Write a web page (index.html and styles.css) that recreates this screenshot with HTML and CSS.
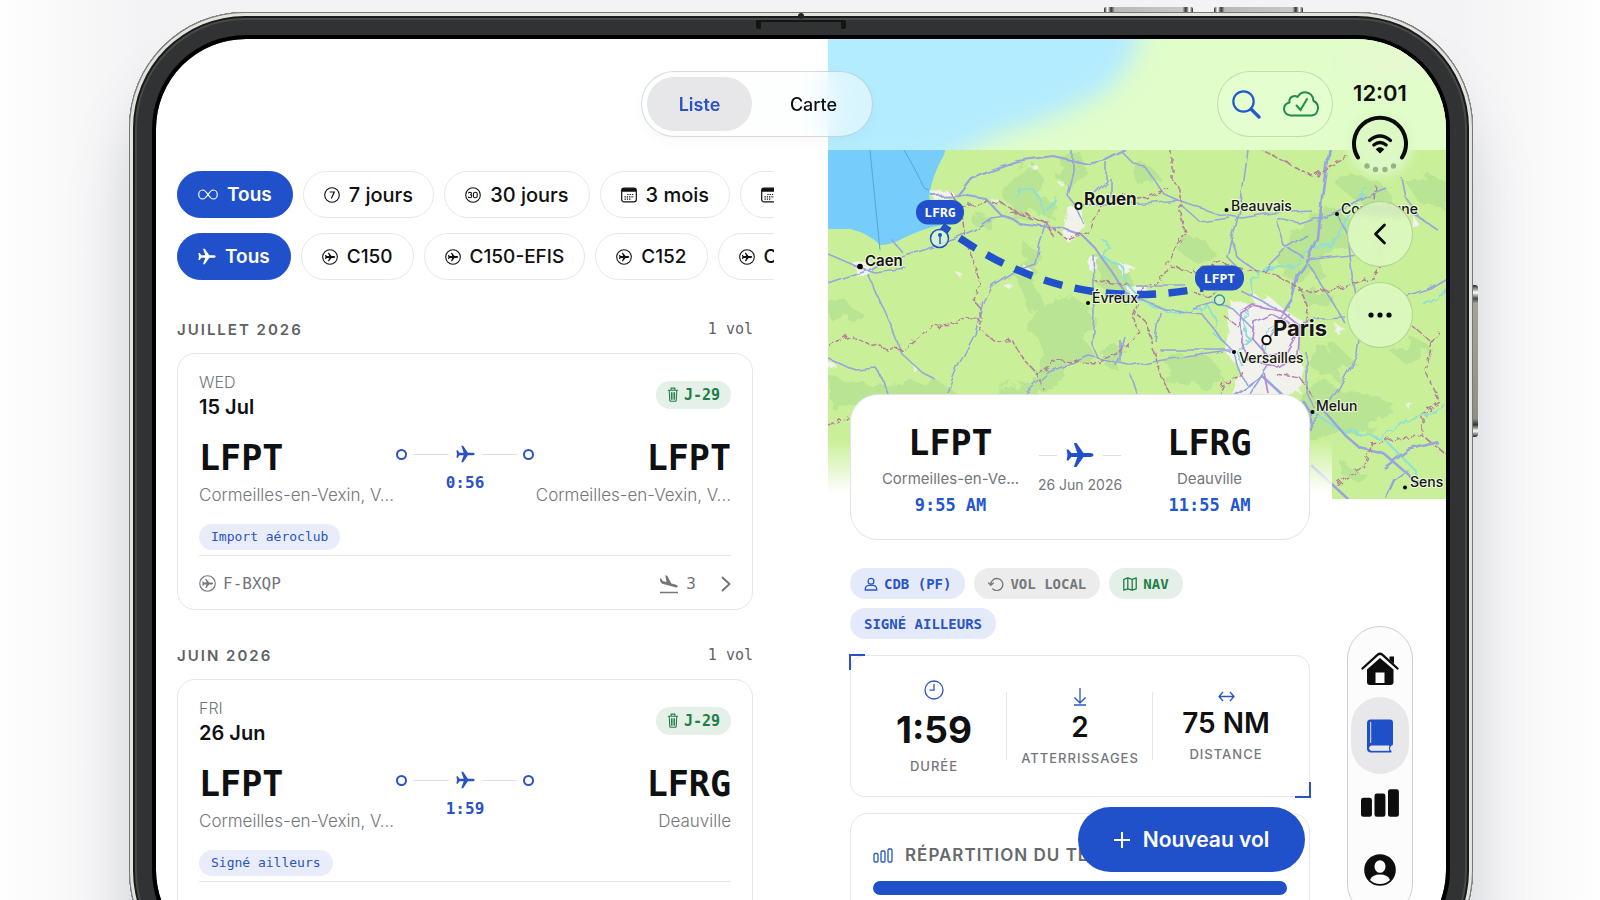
FILE: index.html
```html
<!DOCTYPE html>
<html lang="fr">
<head>
<meta charset="utf-8">
<meta name="viewport" content="width=device-width, initial-scale=1">
<title>Carnet de vol</title>
<link rel="stylesheet" href="styles.css">
</head>
<body>
<svg class="defs" width="0" height="0" aria-hidden="true">
  <symbol id="plane" viewBox="0 0 28 26"><path d="M27.500 13c0 1.300-1.500 2-3.500 2h-6.500l-7 10H7.800l3.500-10H5.200L2.500 18.500H.6L1.500 13 .6 7.500h1.900L5.200 11h6.100L7.800 1h2.700l7 10H24c2 0 3.500.7 3.500 2z" fill="currentColor"/></symbol>
  <symbol id="plane-circle" viewBox="0 0 16 16"><circle cx="8" cy="8" r="7.300" fill="none" stroke="currentColor" stroke-width="1.100"/><path d="M13.200 8c0 .6-.7.9-1.500.9H9.500L7 12.300H5.900L7.200 8.900H4.800l-1 1.200H3L3.400 8 3 5.900h.8l1 1.200h2.400L5.900 3.700H7l2.500 3.400h2.200c.8 0 1.500.3 1.500.9z" fill="currentColor"/></symbol>
  <symbol id="calendar" viewBox="0 0 16 16"><rect x=".7" y="1.200" width="14.600" height="13.600" rx="2.400" fill="none" stroke="currentColor" stroke-width="1.200"/><path d="M.7 4.800V3.500Q.8 1.200 3 1.200h10q2.200 0 2.300 2.300v1.300z" fill="currentColor"/><path d="M6.300 7.500H13M3.500 9.800H13M3.500 12.100h7" stroke="currentColor" stroke-width="1.200" stroke-dasharray="1.300 1"/></symbol>
  <symbol id="trash" viewBox="0 0 12 16"><path d="M1 3.500h10M4 3.300V1.200h4v2.100M2 3.800l.5 10.500q.1.900 1 .9h5q.9 0 1-.9L10 3.800M4.300 6v7M6 6v7M7.700 6v7" fill="none" stroke="currentColor" stroke-width="1.100" stroke-linecap="round"/></symbol>
  <symbol id="landing" viewBox="0 0 20 20"><path d="M1 18.500h18" stroke="currentColor" stroke-width="1.500"/><path d="M.8 4.200l1.300.3 1.600 2.600 3.800 1L6.300 1.300l1.900.5 4.200 7.600 4.800 1.300q2 .8 1.500 2.100-.5.900-2.500.4L3.400 9.700Q1.700 9 1.400 7.500z" fill="currentColor"/></symbol>
  <symbol id="chevron-right" viewBox="0 0 10 16"><path d="M1.500 1.500L8.500 8l-7 6.500" fill="none" stroke="currentColor" stroke-width="2" stroke-linecap="round" stroke-linejoin="round"/></symbol>
</svg>

<div class="scene">
  <div class="device">
    <span class="key key-up"></span><span class="key key-down"></span><span class="key key-power"></span>
    <span class="hinge"></span>
    <main class="screen">

      <section class="list-pane" aria-label="Liste des vols">
        <div class="chip-row">
          <button class="chip chip-on"><svg class="ico" viewBox="0 0 20 11"><path d="M10 5.500C8 2.500 6.500 1 4.700 1a4 4.500 0 0 0 0 9C6.500 10 8 8.500 10 5.500S13.500 1 15.300 1a4 4.500 0 0 1 0 9C13.500 10 12 8.500 10 5.500z" fill="none" stroke="currentColor" stroke-width="1.200"/></svg>Tous</button>
          <button class="chip"><svg class="ico-s" viewBox="0 0 16 16"><circle cx="8" cy="8" r="7.300" fill="none" stroke="currentColor" stroke-width="1.100"/><path d="M5.700 5h4.600L7.300 11.500" fill="none" stroke="currentColor" stroke-width="1.200"/></svg>7 jours</button>
          <button class="chip"><svg class="ico-s" viewBox="0 0 16 16"><circle cx="8" cy="8" r="7.300" fill="none" stroke="currentColor" stroke-width="1.100"/><path d="M3.400 6.200q.4-1 1.700-1 1.500.2 1.300 1.500-.2 1-1.300 1.100 1.700.1 1.700 1.500-.2 1.500-1.800 1.500-1.400 0-1.800-1.200" fill="none" stroke="currentColor" stroke-width="1.100"/><rect x="8.400" y="5.200" width="3.800" height="5.600" rx="1.800" fill="none" stroke="currentColor" stroke-width="1.100"/></svg>30 jours</button>
          <button class="chip"><svg class="ico-s"><use href="#calendar"/></svg>3 mois</button>
          <button class="chip" aria-label="Période plus longue"><svg class="ico-s"><use href="#calendar"/></svg></button>
        </div>
        <div class="chip-row aircraft">
          <button class="chip chip-on"><svg class="ico-p"><use href="#plane"/></svg>Tous</button>
          <button class="chip"><svg class="ico-s"><use href="#plane-circle"/></svg>C150</button>
          <button class="chip"><svg class="ico-s"><use href="#plane-circle"/></svg>C150-EFIS</button>
          <button class="chip"><svg class="ico-s"><use href="#plane-circle"/></svg>C152</button>
          <button class="chip"><svg class="ico-s"><use href="#plane-circle"/></svg>C</button>
        </div>

        <div class="month">
          <header class="month-head"><h2>JUILLET 2026</h2><span class="count">1 vol</span></header>
          <article class="flight">
            <div class="flight-top">
              <div class="date"><span class="weekday">WED</span><strong>15 Jul</strong></div>
              <span class="left-days"><svg><use href="#trash"/></svg>J-29</span>
            </div>
            <div class="route">
              <div class="stop"><span class="code">LFPT</span><span class="city">Cormeilles-en-Vexin, V...</span></div>
              <div class="leg"><div class="leg-line"><i class="dot"></i><i class="line"></i><svg><use href="#plane"/></svg><i class="line"></i><i class="dot"></i></div><span class="duration">0:56</span></div>
              <div class="stop stop-end"><span class="code">LFPT</span><span class="city">Cormeilles-en-Vexin, V...</span></div>
            </div>
            <span class="origin">Import aéroclub</span>
            <footer class="flight-foot"><svg class="foot-reg"><use href="#plane-circle"/></svg><span class="reg">F-BXQP</span><svg class="foot-land"><use href="#landing"/></svg><span class="landings">3</span><svg class="foot-go"><use href="#chevron-right"/></svg></footer>
          </article>
        </div>

        <div class="month">
          <header class="month-head"><h2>JUIN 2026</h2><span class="count">1 vol</span></header>
          <article class="flight">
            <div class="flight-top">
              <div class="date"><span class="weekday">FRI</span><strong>26 Jun</strong></div>
              <span class="left-days"><svg><use href="#trash"/></svg>J-29</span>
            </div>
            <div class="route">
              <div class="stop"><span class="code">LFPT</span><span class="city">Cormeilles-en-Vexin, V...</span></div>
              <div class="leg"><div class="leg-line"><i class="dot"></i><i class="line"></i><svg><use href="#plane"/></svg><i class="line"></i><i class="dot"></i></div><span class="duration">1:59</span></div>
              <div class="stop stop-end"><span class="code">LFRG</span><span class="city">Deauville</span></div>
            </div>
            <span class="origin">Signé ailleurs</span>
            <footer class="flight-foot"></footer>
          </article>
        </div>
      </section>

      <section class="detail-pane" aria-label="Détail du vol">
        <svg class="map" viewBox="828 39 618 460" preserveAspectRatio="xMidYMin slice" role="img" aria-label="Trajet LFPT vers LFRG">
          <defs>
            <filter id="rough" x="-5%" y="-5%" width="110%" height="110%"><feTurbulence type="fractalNoise" baseFrequency=".12" numOctaves="2" seed="4"/><feDisplacementMap in="SourceGraphic" scale="9"/></filter>
            <filter id="rough2" x="-5%" y="-5%" width="110%" height="110%"><feTurbulence type="fractalNoise" baseFrequency=".06" numOctaves="3" seed="9"/><feDisplacementMap in="SourceGraphic" scale="22"/></filter>
            <filter id="wobble" x="-5%" y="-5%" width="110%" height="110%"><feTurbulence type="fractalNoise" baseFrequency=".05" numOctaves="2" seed="2"/><feDisplacementMap in="SourceGraphic" scale="7"/></filter>
            <filter id="soft" x="-20%" y="-20%" width="140%" height="140%"><feGaussianBlur stdDeviation="12"/></filter>
            <filter id="soft-s" x="-20%" y="-20%" width="140%" height="140%"><feGaussianBlur stdDeviation="5"/></filter>
            <linearGradient id="fade" x1="0" y1="0" x2="0" y2="1"><stop offset="0" stop-color="#fff" stop-opacity="0"/><stop offset=".9" stop-color="#fff"/></linearGradient>
            <clipPath id="veil"><rect x="828" y="39" width="618" height="111"/></clipPath>
          </defs>
          <rect x="828" y="39" width="618" height="460" fill="#c9f098"/>

          <!-- woodland -->
          <g filter="url(#rough2)" fill="#b8e493">
            <path d="M1015 168l18-6 8 14-6 18 22 10-4 14-24-6-14 10-8-22z"/><path d="M1063 160l16-10 8 22-14 16-14-6z"/>
            <path d="M1026 244l14 10-8 28 10 22-14 8-10-30z"/><path d="M1036 306l36-10 24 18-12 20 8 22-26 12-14 24-20-12 12-26-12-20z"/>
            <path d="M1096 256l26 6 16 30-12 14-30-22z"/><path d="M828 376l34 8 30 2 40-8 24 14-6 12-120 4z"/><path d="M828 300l22 4 14 10-20 8-16-4z"/>
            <path d="M1300 222l26-16 30 16-12 26-34 8-12 16-22-12z"/><path d="M1284 248l34 4 4 20-24 10-20-10z"/><path d="M1334 182l28-6 20 8 10 20-30 2z"/>
            <path d="M1170 354l40 4 16 18-22 12-40-6z"/><path d="M1310 350l26-4 18 14-16 20-24-10z"/><path d="M1260 440l60-60 40 14 36 10-24 28-60 4z"/><path d="M1404 180l24-6 18 8v28l-24-4z"/>
            <path d="M1182 238l26 4 8 14-18 6-18-10z"/><path d="M996 386l40-6 20 10-10 10h-48z"/><path d="M1130 170l20-4 8 10-20 8z"/><path d="M1345 466l20 6-4 10-16-4z"/>
            <path d="M1105 340l20 6-8 24-16-8z"/><path d="M1300 290l30 2 6 12-24 6z"/><path d="M1388 350l30-10 16 10-28 14z"/><path d="M975 212l20 8-8 8-14-4z"/>
          </g>

          <!-- sea -->
          <path d="M828 140h120l-4 15q-12 20-15 42l6 12 7 16q-22 4-44 16-10 4-18 4-12-12-30-16h-22z" fill="#76cdfb"/>
          <path d="M870 150l10 100M904 150q14 24 20 38l20 9" fill="none" stroke="#58a5d6" stroke-width="1"/>

          <!-- built-up areas -->
          <g filter="url(#rough)" fill="#f2f2ec">
            <path d="M929 190l24 2 4 6-22 2zM852 262l18-2 4 12-14 6zM1068 208h12l4 18-14 18-8-8z"/>
            <path d="M1230 300l20 4 18-8 22 18 12 6-4 30 6 22-4 20-30 6-20-6-18 4 8-26-14-18z"/>
            <path d="M1090 254l8 2-3 16-6-2zM1250 290l20 16-14 2zM1118 262l18 6-14 8zM990 200l6-3 2 6zM1029 167l8-2 2 4zM1057 182l5-2-1 6zM1002 284l12 2-4 4zM955 272l8 2-4 2zM912 362l6 6-6 2zM1012 360l5-3zM1128 288h20v10h-18zM1414 216l6 10-6 4zM1334 322l12 8-10 4zM1022 264l8 4-4 6z"/>
            <path d="M828 362l8 2-6 6zM1166 410l10 4-8 6zM1250 392l30 2-4 14-18 2zM1406 406l8-2-4 5z"/>
          </g>
          <g fill="none" stroke="#8edfd6" stroke-width="2" filter="url(#rough)">
            <path d="M1018 198q2-14 14-10l10 14 2 14M1048 212q4-12 8-16M1100 238q14 4 4 20l18 8 4 16 10 12"/><path d="M1128 294l30 14 24 6 26-8 10 16-6 10 14 12M1248 310q-8 26 4 30l-16 12 6 14"/>
            <path d="M1252 296v-16l14-12 30-2 16-18 20-4 20-34 14-22M1270 400l40 10 30 20 40 8 22-16 30-10 14-6M1385 440l30 30 4 14"/><path d="M1425 306l26-18M1284 322l-16 6-4 24"/>
          </g>

          <!-- roads -->
          <g fill="none" stroke="#98a5dc" stroke-width="1.600" stroke-linejoin="round" filter="url(#wobble)">
            <path stroke-width="2.200" d="M957 196l14-18 16-7 30-10 36-5 35 8 18-4 20-10M932 196l30-1 24 4 15 16 18 8 45 6 18 6 14 14 34 50"/>
            <path d="M828 283l40-14 10-6 36-11 46-16 14-6 17-12 14-2M828 254l28 12 18 6 32-4M868 274l22 50 12 30 22 20 12 6M947 392l10-24 18-34 8-32 8-16 22-14 22-8 4-22 8-22"/>
            <path d="M1072 150v20l-6 24 10 12 8 18M1106 162v18l-16 16M1084 206l60-3 34-3 40 14 24 4 30-5 40-2"/>
            <path d="M1120 150l14 14 10 2 20 28 14 6M1248 150l-4 30-4 30-8 30 6 18 20 14M1230 218l-30 4-20-18M1092 254l2 60-2 30 6 14"/>
            <path d="M828 358l30 14 20-2 10 24M1025 394l24-22 40-16 44 10 30-6 60-8M1130 374l8 24M1116 366l8-30M1136 286h50M1128 294l40 16 34 4 20 26 10 10 10 26 4 8"/>
            <path stroke-width="2.600" d="M1329 145l-7 52-4 42-10 22-10 14-6 24-14 22M1262 376l-30 20M1262 376l26 24"/>
            <path d="M1250 394l18-28-6-20 14-20 14-12M1254 330l-20-20-22-8-20 6M1273 332l46-14 26-1M1308 264l38 60M1306 260l52-6M1276 218l24 6 36-12 30-16 20-8M1276 220l8 26 20 12M1337 214l10 20 4 40 10 50-4 30-18 34-16 24-12 10M1402 178l4 20 14 20 20 14M1400 298l30-10 20-12M1424 220l-12-6M1306 352v40l8 16M1160 312l-4 30M1264 270l20-20 24-14"/>
            <path stroke-width="2.400" d="M1316 402l30 34 14 12 24 6 24 20 8 10M1384 468l24-18 30-8M1310 430v-18l-8-12M1310 464l38 35M1386 498l8-18 14-10"/>
            <path d="M1110 196v-18M1232 240l-4 18 14 14M1240 290l36 18M1230 350h-70M1120 340v22M892 240l10 12"/>
          </g>
          <g fill="none" stroke="#b58bd6" stroke-width="1.800" filter="url(#wobble)"><path d="M1252 338l2-16 18-8 16 8 8 16-8 14-20 4zM1240 312l12-8 28 6 20 16-2 30-20 12-30-8-6-20zM1265 374l4 20"/></g>

          <!-- département borders -->
          <g fill="none" stroke="#b57b9c" stroke-width="1.500" stroke-dasharray="6 2" filter="url(#rough)">
            <path d="M950 192l10 14 4 30 8 22 8 22-6 20 6 8v22l16 12 16-2 12 20 12 12 8 18M960 206l40-4 24 14 24 8 20 16 22-10 14-30 22-6 20 4 22-10M1010 212l16 2 20 10 8 14"/>
            <path d="M828 344l24-8 20 10 30 4 30-24 20-2 16-6 12 2M1172 150v30l8 8v24l6 24-14 16-12 30-18 8-10 26 8 16-24 22-20 8-38-2-22 14M1154 346l-10-26-10-8M1170 266l20 6 30-10 24 8 26 2 30 16 8 20-2 24M1258 148l54 28 18-10 20-10"/>
            <path d="M1298 290l20 2 30-6 26-10 10-12-6-20-6-30 4-30M1224 316l14 10M1245 374l-20 8-10 20M1154 350l6 24 10 20M1276 374l24 4 14 20M1412 326l20 16 8-12M1432 342l-6 30 14 30-18 12v20l-50 10-8 24-18 10-10 10M1420 434l26 20M828 425l20-8M1092 280l40 6M1192 290l12 8 14-6"/>
          </g>

          <!-- frosted header -->
          <g clip-path="url(#veil)">
            <rect x="828" y="39" width="618" height="111" fill="#e0fdca"/>
            <path d="M780 0h366l-12 56-26 34-54 26-60 20-60 30H780z" fill="#b4ecff" filter="url(#soft)"/>
            <ellipse cx="1400" cy="62" rx="60" ry="14" fill="#eaf8d2" filter="url(#soft)"/>
          </g>
          <circle cx="1380" cy="144" r="32" fill="#dcf8c4" filter="url(#soft-s)"/>
          <path d="M828 440h504v59H828z" fill="url(#fade)"/>

          <!-- track -->
          <path d="M942 226C1007 273 1087 310 1203 288" fill="none" stroke="#2150cb" stroke-width="7.500" stroke-dasharray="19 12.500" stroke-dashoffset="10"/>
          <circle cx="939.500" cy="238.500" r="9" fill="#dcf2ea" fill-opacity=".7" stroke="#1f58b5" stroke-width="1.500"/><path d="M940 236v8" stroke="#1f58b5" stroke-width="1.500"/><circle cx="940" cy="235" r="2" fill="#1f58b5"/>
          <circle cx="1219.500" cy="300" r="5" fill="#cdf0c4" stroke="#3b8fae" stroke-width="1.400"/>

          <g class="towns">
            <circle cx="860" cy="266.500" r="2.800"/><text x="865" y="266" font-size="15">Caen</text>
            <circle cx="1078.500" cy="206" r="3" class="ring"/><text x="1084" y="205" font-size="17" class="major">Rouen</text>
            <circle cx="1088" cy="303" r="2"/><text x="1092" y="303" font-size="14" class="minor">Évreux</text>
            <circle cx="1226.500" cy="210" r="2"/><text x="1231" y="211" font-size="14" class="minor">Beauvais</text>
            <circle cx="1337" cy="214" r="2"/><text x="1341" y="214" font-size="14" class="minor">Compiègne</text>
            <circle cx="1266.500" cy="340" r="4.200" class="ring"/><text x="1273" y="336" font-size="22" class="major">Paris</text>
            <circle cx="1234" cy="352" r="2"/><text x="1239" y="363" font-size="14" class="minor">Versailles</text>
            <circle cx="1312.500" cy="412" r="2"/><text x="1316" y="411" font-size="14" class="minor">Melun</text>
            <circle cx="1405" cy="487.500" r="2"/><text x="1410" y="487" font-size="14" class="minor">Sens</text>
          </g>
          <rect x="916" y="200" width="48" height="24.500" rx="12" fill="#2150cb"/><text class="pin" x="940" y="217" text-anchor="middle">LFRG</text>
          <rect x="1195" y="265.500" width="49" height="25" rx="12" fill="#2150cb"/><text class="pin" x="1219.500" y="283" text-anchor="middle">LFPT</text>
        </svg>

        <div class="detail">
          <div class="summary">
            <div class="end"><span class="code">LFPT</span><span class="end-city">Cormeilles-en-Ve...</span><span class="time">9:55 AM</span></div>
            <div class="mid"><div class="mid-line"><i class="line"></i><svg><use href="#plane"/></svg><i class="line"></i></div><span class="day">26 Jun 2026</span></div>
            <div class="end"><span class="code">LFRG</span><span class="end-city">Deauville</span><span class="time">11:55 AM</span></div>
          </div>

          <div class="tags">
            <span class="tag"><svg viewBox="0 0 14 14"><circle cx="7" cy="4.200" r="2.900" fill="none" stroke="currentColor" stroke-width="1.300"/><path d="M1.200 13q0-4.300 3.600-4.600h4.400q3.600.3 3.600 4.600z" fill="none" stroke="currentColor" stroke-width="1.300" stroke-linejoin="round"/></svg>CDB (PF)</span>
            <span class="tag tag-grey"><svg class="wide" viewBox="0 0 16 14"><path d="M2.800 7.500a6 6 0 1 1 2 4.500M.6 6l2.200 2.300L5.400 6" fill="none" stroke="currentColor" stroke-width="1.300" stroke-linecap="round"/></svg>VOL LOCAL</span>
            <span class="tag tag-green"><svg viewBox="0 0 14 14"><path d="M.8 2.300l4-1.500 4.400 1.500 4-1.500v11l-4 1.400-4.400-1.400-4 1.400zM4.800.8v11M9.200 2.300v11" fill="none" stroke="currentColor" stroke-width="1.300" stroke-linejoin="round"/></svg>NAV</span>
            <span class="tag">SIGNÉ AILLEURS</span>
          </div>

          <div class="stats">
            <div class="stat"><svg class="clock" viewBox="0 0 20 20"><circle cx="10" cy="10" r="9" fill="none" stroke="currentColor" stroke-width="1.300"/><path d="M10 4v6.200H5.500" fill="none" stroke="currentColor" stroke-width="1.300"/></svg><strong class="big">1:59</strong><span>DURÉE</span></div>
            <div class="stat"><svg class="down" viewBox="0 0 14 18"><path d="M7 0v15M1.500 9.500L7 15l5.500-5.500M1 17h12" fill="none" stroke="currentColor" stroke-width="1.300"/></svg><strong>2</strong><span>ATTERRISSAGES</span></div>
            <div class="stat"><svg class="span-ico" viewBox="0 0 17 11"><path d="M1 5.500h15M5 1L1 5.500 5 10M12 1l4 4.500-4 4.500" fill="none" stroke="currentColor" stroke-width="1.300"/></svg><strong>75 NM</strong><span>DISTANCE</span></div>
          </div>

          <div class="split">
            <h3><svg viewBox="0 0 20 15"><g fill="none" stroke="currentColor" stroke-width="1.300"><rect x="1" y="5.500" width="4" height="8.500" rx="1.200"/><rect x="8" y="3" width="4" height="11" rx="1.200"/><rect x="15" y="1" width="4" height="13" rx="1.200"/></g></svg>RÉPARTITION DU TEMPS</h3>
            <div class="bar"></div>
          </div>
        </div>

        <aside class="rail">
          <time>12:01</time>
          <svg class="wifi" viewBox="0 0 58 60"><path d="M7 42.500a26 26 0 1 1 44 0" fill="none" stroke="#0a0a0a" stroke-width="4" stroke-linecap="round"/><path d="M18.500 25.500q10.500-9 21 0M22.800 30q6.200-5 12.400 0" fill="none" stroke="#0a0a0a" stroke-width="3.200" stroke-linecap="round"/><path d="M29 37.500l-3.200-3.200q3.200-2.500 6.400 0z" fill="#0a0a0a" stroke="#0a0a0a" stroke-width="1.500"/><g fill="#93b583"><circle cx="16" cy="51" r="2.700"/><circle cx="24.500" cy="54.500" r="2.700"/><circle cx="34" cy="54.500" r="2.700"/><circle cx="42.500" cy="51" r="2.700"/></g></svg>
          <button class="round" aria-label="Retour"><svg viewBox="0 0 14 22"><path d="M11.500 2L2.500 11l9 9" fill="none" stroke="#0a0a0a" stroke-width="2.800" stroke-linecap="round" stroke-linejoin="round"/></svg></button>
          <button class="round" aria-label="Plus"><svg class="more" viewBox="0 0 24 6"><circle cx="3" cy="3" r="2.600"/><circle cx="12" cy="3" r="2.600"/><circle cx="21" cy="3" r="2.600"/></svg></button>
          <nav class="tabs">
            <a href="#accueil" aria-label="Accueil"><svg viewBox="0 0 38 34"><path d="M1.500 16.500L17 2.500q2-1.500 4 0l15.500 14" fill="none" stroke="currentColor" stroke-width="2.300" stroke-linecap="round"/><path d="M28.500 4.500h4.500v7.500l-4.500-4z" fill="currentColor"/><path fill-rule="evenodd" d="M6 17.500L19 6l13.500 11.500V30q0 3-3 3H9q-3 0-3-3zM14.500 20.500V31h9V20.500z" fill="currentColor"/></svg></a>
            <a href="#carnet" class="tab-on" aria-label="Carnet"><svg viewBox="0 0 27 34"><path d="M4 .5h19.500q3 0 3 3V25q0 1.500-1.500 1.500-3 3 0 5.500.500 1.500-1 1.500H4.500q-4 0-4-4V4q0-3.500 3.500-3.500z" fill="currentColor"/><path d="M4.200 3v21M3 29.200q0-2.200 2.200-2.200H22.500q-1.300 2 0 4.300H5.200Q3 31.300 3 29.200z" fill="#e8e8ec" stroke="#e8e8ec" stroke-width="1"/></svg></a>
            <a href="#stats" aria-label="Statistiques"><svg viewBox="0 0 40 30"><g fill="currentColor"><rect y="9.500" width="11.500" height="20" rx="2.500"/><rect x="14.200" y="5" width="11.500" height="24.500" rx="2.500"/><rect x="28.400" y=".5" width="11.500" height="29" rx="2.500"/></g></svg></a>
            <a href="#profil" aria-label="Profil"><svg viewBox="0 0 34 34"><circle cx="17" cy="17" r="15.800" fill="currentColor"/><ellipse cx="17" cy="13.500" rx="5.500" ry="6.300" fill="#fcfcfc"/><path d="M7 27q2-5.500 10-5.500T27 27q-4 4-10 4T7 27z" fill="#fcfcfc"/></svg></a>
          </nav>
        </aside>
        <button class="fab"><svg viewBox="0 0 16 16"><path d="M8 .5v15M.5 8h15" stroke="currentColor" stroke-width="2" stroke-linecap="round"/></svg>Nouveau vol</button>
      </section>

      <header class="top-bar">
        <div class="switch"><button class="on">Liste</button><button>Carte</button></div>
        <div class="actions">
          <button aria-label="Rechercher"><svg class="search" viewBox="0 0 29 29"><circle cx="11.500" cy="11.500" r="10.200" fill="none" stroke="#2458cf" stroke-width="2.200"/><path d="M19 19l8 8" stroke="#2458cf" stroke-width="3.200" stroke-linecap="round"/></svg></button>
          <button aria-label="Synchronisé"><svg class="cloud" viewBox="0 0 36 26"><path d="M8 24.500q-6.500-.5-7-6.500.2-5.500 5.500-6.500-.8-5 4-6.300 2.300-.5 4 .8Q17.500 1 22.500 1.200q7.500.8 8 8.800 4.500 2 4.500 7-.5 7-6.500 7.500z" fill="none" stroke="#1f8b4c" stroke-width="2" stroke-linejoin="round"/><path d="M13.500 14.500l4 4.500 6.500-11" fill="none" stroke="#1f8b4c" stroke-width="2"  stroke-linecap="round"/></svg></button>
        </div>
      </header>
    </main>
  </div>
</div>
</body>
</html>
```

FILE: styles.css
```css
:root {
  --blue: #2150cb;
  --green: #1f7d49;
  --grey: #73767a;
  --ink: #0f1011;
  --line: #e6e7e8;
  --sans: Inter, "Noto Sans", sans-serif;
  --mono: "DejaVu Sans Mono", "Liberation Mono", monospace;
}
* { box-sizing: border-box; }
body { margin: 0; font-family: var(--sans); color: var(--ink); background: #f7f7f9; }
button { font: inherit; color: inherit; border: 0; background: none; padding: 0; }
h2, h3 { margin: 0; }
.defs { position: absolute; }

.scene { height: 100vh; overflow: hidden; padding-top: 12px; background: linear-gradient(90deg, #fefefe, #f3f3f5 9%, #f3f3f5 91%, #fefefe); }
.device {
  position: relative; width: 84%; margin: 0 auto 0 calc(8% + 1px); padding: 27px; border-radius: 116px; background: #303233;
  box-shadow: inset 0 0 0 1px #77777a, inset 0 0 0 4px #e3e3e0, inset 0 0 0 6px #191a1a, inset 0 0 0 8px #48494a, 0 60px 60px rgba(80, 90, 105, .22);
}
.key { position: absolute; background: linear-gradient(90deg, #222, #fff 4%, #333 8%, #b9b9b5 12%, #c9c9c4 88%, #333 92%, #fff 96%, #222); height: 5px; width: 89px; top: -5px; border-radius: 2px 2px 0 0; }
.key-up { right: 280px; }
.key-down { right: 170px; }
.key-power { top: 273px; right: -5px; width: 5px; height: 152px; background: linear-gradient(#222, #fff 5%, #444 9%, #a3a39a 12%, #8f8f86 88%, #333 92%, #fff 96%, #222); border-radius: 0 3px 3px 0; }
.hinge { position: absolute; top: 8px; left: 627px; width: 90px; height: 9px; border: solid #131414; border-width: 2px 5px 0; border-radius: 2px; }
.hinge::before { content: ""; position: absolute; left: 37px; top: -9px; width: 6px; height: 6px; background: #222; border-radius: 50%; }

.screen { position: relative; display: grid; grid-template-columns: minmax(0, 672fr) minmax(0, 618fr); min-height: 921px; background: #fff; border-radius: 90px; overflow: hidden; outline: 4px solid #000; }

/* header laid over both panes */
.top-bar { position: absolute; inset: 0 0 auto; display: flex; justify-content: space-between; padding: 32px 113px 0 485px; }
.switch { display: flex; width: 232px; height: 66px; padding: 5px; border-radius: 33px; background: rgba(252, 254, 254, .5); border: 1px solid rgba(120, 140, 140, .3); box-shadow: 0 4px 14px rgba(0, 0, 0, .03); backdrop-filter: blur(14px); font-size: 18px; font-weight: 500; }
.switch button { flex: 1; border-radius: 27px; padding-left: 8px; }
.switch .on { flex: none; width: 105px; padding: 0; background: #e7e7e9; color: #2a52c4; font-weight: 600; }
.actions { display: flex; align-items: center; justify-content: center; gap: 22px; width: 116px; height: 66px; border-radius: 33px; border: 1px solid rgba(110, 150, 90, .3); background: rgba(232, 255, 214, .5); }
.actions svg { display: block; }
.search { width: 29px; height: 29px; }
.cloud { width: 36px; height: 26px; }

/* list */
.list-pane { min-width: 0; padding: 132px 54px 0 21px; }
.chip-row { display: flex; gap: 10px; overflow: hidden; margin-bottom: 15px; }
.chip { flex: none; display: flex; align-items: center; gap: 9px; height: 47px; padding: 0 20px; border: 1px solid var(--line); border-radius: 24px; font-size: 20px; font-weight: 500; white-space: nowrap; background: #fff; }
.aircraft .chip { font-size: 19px; }
.chip-on { background: var(--blue); border-color: var(--blue); color: #fff; font-weight: 600; font-size: 19px; }
.ico { width: 20px; height: 11px; }
.ico-s { width: 16px; height: 16px; }
.ico-p { width: 18px; height: 17px; }

.month { margin-right: 21px; padding-top: 21px; }
.month + .month { padding-top: 32px; }
.month-head { display: flex; justify-content: space-between; align-items: center; height: 26px; margin-bottom: 11px; color: #5f6265; }
.month-head h2 { font-size: 15px; font-weight: 600; letter-spacing: 2px; }
.count { font: 15px var(--mono); }
.flight { height: 257px; padding: 15px 21px 0; border: 1px solid var(--line); border-radius: 18px; }
.flight-top { display: flex; justify-content: space-between; align-items: center; height: 51px; }
.date { display: grid; line-height: 25px; }
.weekday { font-size: 16px; color: var(--grey); font-weight: 300; }
.date strong { font-size: 20px; font-weight: 600; }
.left-days { display: flex; align-items: center; gap: 5px; height: 28px; padding: 0 11px; border-radius: 14px; background: #e4f0e8; color: var(--green); font: bold 15px var(--mono); }
.left-days svg { width: 12px; height: 15px; }
.code { font: bold 35px/40px var(--mono); }
.route { display: grid; grid-template-columns: minmax(0, 1fr) 138px minmax(0, 1fr); margin-top: 18px; height: 80px; }
.stop { display: grid; align-content: start; justify-items: start; min-width: 0; white-space: nowrap; }
.stop-end { justify-items: end; }
.city { font-size: 17px; line-height: 34px; color: var(--grey); font-weight: 300; }
.leg { color: #2a52c4; text-align: center; padding-top: 6px; }
.leg-line { display: flex; align-items: center; gap: 6px; height: 20px; }
.leg-line svg { width: 19px; height: 18px; flex: none; margin: 0 1px; }
.dot { width: 11px; height: 11px; border: 2px solid #2a52c4; border-radius: 50%; }
.line { flex: 1; height: 1px; background: #dedfe2; }
.duration { display: block; font: bold 16px/38px var(--mono); }
.origin { display: inline-block; margin-top: 6px; padding: 0 12px; border-radius: 13px; background: #e9edfb; color: #2a52c4; font: 13px/26px var(--mono); }
.flight-foot { display: flex; align-items: center; margin-top: 5px; height: 56px; border-top: 1px solid var(--line); color: var(--grey); font: 16px var(--mono); }
.foot-reg { width: 17px; height: 17px; margin-right: 7px; }
.foot-land { width: 20px; height: 20px; margin: 0 7px 0 auto; }
.foot-go { width: 10px; height: 16px; margin-left: 25px; }

/* detail */
.detail-pane { position: relative; display: grid; grid-template-columns: minmax(0, 504fr) minmax(0, 114fr); min-width: 0; }
.map { position: absolute; inset: 0 0 auto; width: 100%; height: 460px; }
.towns text { font-family: var(--sans); font-weight: 600; fill: #151515; stroke: #f6fbe8; stroke-width: 2px; paint-order: stroke; stroke-opacity: .8; }
.towns .minor { font-weight: 500; }
.towns .major { font-weight: 700; }
.towns .ring { fill: #fff; stroke: #111; stroke-width: 2px; }
.pin { font: bold 13px var(--mono); fill: #fff; }
.detail { position: relative; padding: 355px 22px 0; }
.summary { display: grid; grid-template-columns: 1fr 96px 1fr; height: 146px; padding: 28px 18px 0; border: 1px solid #e2e4e4; border-radius: 28px; background: #fff; }
.end { display: grid; justify-items: center; align-content: start; white-space: nowrap; }
.end-city { font-size: 15px; line-height: 30px; color: var(--grey); margin-top: 1px; }
.time { font: bold 17px/22px var(--mono); color: #2457ce; }
.mid { display: grid; justify-items: center; align-content: start; padding-top: 19px; white-space: nowrap; }
.mid-line { display: flex; align-items: center; justify-content: center; width: 82px; gap: 9px; }
.mid-line svg { width: 28px; height: 26px; flex: none; color: var(--blue); }
.day { font-size: 14px; line-height: 34px; color: var(--grey); font-weight: 400; }
.tags { display: flex; flex-wrap: wrap; gap: 9px; margin-top: 28px; }
.tag { display: flex; align-items: center; gap: 6px; height: 31px; padding: 0 14px; border-radius: 16px; background: #e5eafa; color: #2a55c4; font: bold 14px var(--mono); }
.tag svg { width: 14px; height: 14px; }
.tag svg.wide { width: 16px; }
.tag-grey { background: #ececed; color: #76797c; }
.tag-green { background: #e4efe8; color: var(--green); }
.stats { position: relative; display: grid; grid-template-columns: 156px 146px 1fr; align-items: center; height: 142px; margin-top: 16px; border: 1px solid var(--line); border-radius: 14px; }
.stats::before, .stats::after { content: ""; position: absolute; width: 14px; height: 14px; border: solid #2a52c4; }
.stats::before { top: -2px; left: -2px; border-width: 2px 0 0 2px; }
.stats::after { right: -2px; bottom: -2px; border-width: 0 2px 2px 0; }
.stat { display: grid; justify-items: center; padding-top: 6px; }
.stat + .stat { position: relative; }
.stat + .stat::before { content: ""; position: absolute; left: -1px; top: 50%; height: 68px; margin-top: -34px; border-left: 1px solid var(--line); }
.stat:first-child { padding-left: 10px; }
.stat:last-child { padding-right: 10px; }
.stat svg { color: #2a55c4; }
.clock { width: 20px; height: 20px; }
.down { width: 14px; height: 18px; }
.span-ico { width: 17px; height: 11px; }
.stat strong { font-size: 28px; line-height: 36px; font-weight: 600; margin-top: 3px; }
.stat .big { font-size: 37px; line-height: 46px; margin-top: 7px; font-weight: 700; }
.stat span { font-size: 13px; line-height: 26px; letter-spacing: 1px; color: var(--grey); font-weight: 500; }
.split { height: 147px; margin-top: 16px; padding: 28px 22px 0; border: 1px solid var(--line); border-radius: 18px; }
.split h3 { display: flex; align-items: center; gap: 12px; height: 26px; font-size: 17px; font-weight: 600; letter-spacing: 1px; color: #66696c; white-space: nowrap; }
.split h3 svg { width: 20px; height: 15px; color: #2a55c4; }
.bar { height: 14px; margin-top: 13px; border-radius: 7px; background: var(--blue); }
.fab { position: absolute; left: 250px; top: 768px; display: flex; align-items: center; justify-content: center; gap: 13px; width: 227px; height: 65px; border-radius: 33px; background: var(--blue); color: #fff; font-size: 21px; font-weight: 600; }
.fab svg { width: 16px; height: 16px; }

/* right rail */
.rail { position: relative; display: flex; flex-direction: column; align-items: center; padding: 40px 18px 43px 0; }
.rail time { font-size: 22px; line-height: 28px; font-weight: 600; }
.wifi { width: 58px; height: 60px; margin: 8px 0 26px; flex: none; }
.round { display: grid; place-items: center; flex: none; width: 66px; height: 66px; border-radius: 50%; margin-bottom: 15px; background: rgba(222, 250, 198, .8); border: 1px solid rgba(110, 150, 90, .4); backdrop-filter: blur(5px); }
.round svg { width: 14px; height: 22px; }
.round .more { width: 24px; height: 6px; }
.tabs { margin-top: auto; display: grid; width: 66px; padding: 8px 3px 13px; border-radius: 33px; border: 1px solid #cfcfd1; background: #fcfcfc; }
.tabs a { display: grid; place-items: center; height: 67px; color: #0d0d0d; }
.tabs .tab-on { height: 77px; margin: -5px 0; border-radius: 30px; background: #e8e8ea; color: #1f50c8; }
.tabs svg { width: 38px; height: 34px; }
```
